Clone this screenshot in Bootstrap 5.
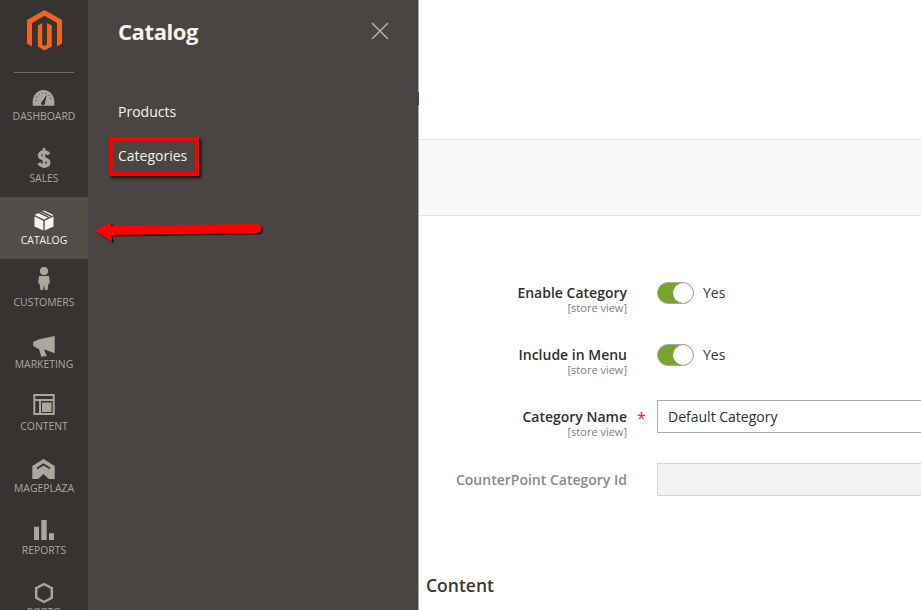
<!DOCTYPE html>
<html lang="en">
<head>
<meta charset="utf-8">
<title>Catalog</title>
<link href="https://cdn.jsdelivr.net/npm/bootstrap@5.3.0/dist/css/bootstrap.min.css" rel="stylesheet">
<style>
html,body{height:610px;overflow:hidden;background:#fff}
body{font-family:"Open Sans","Noto Sans",sans-serif;color:#303030}
.shell{height:610px;overflow:hidden}
.rail{width:88px;background:#373330;flex:none;height:610px;overflow:hidden}
.logo-box{height:73px;padding-top:10px;position:relative}
.logo-box svg{display:block;margin:0 auto}
.logo-box::after{content:"";position:absolute;left:14px;right:14px;bottom:0;height:1px;background:#736e6a}
.rail-item{height:62px;color:#aaa6a0;font-size:10.4px;line-height:14px;text-decoration:none;padding-top:12px;white-space:nowrap}
.rail-item.on{background:#524d49;color:#f7f3eb;font-weight:500}
.rail-icon{height:24px;display:block}
.rail-icon svg{display:block;overflow:visible}
.flyout{width:331px;flex:none;background:#4a4542;border-right:1px solid #a8a8a8;height:610px;position:relative;padding:15px 29px 0 30px}
.fly-title{font-size:22px;font-weight:700;letter-spacing:-.4px;color:#f7f3eb;line-height:32px;margin:0}
.fly-link{color:#f7f3eb;font-size:14px;font-weight:500;line-height:20px;text-decoration:none;display:block}
.fly-nav{margin-top:55px;gap:24px}
.fly-close{position:absolute;left:283px;top:22px}
.mark-box{position:absolute;left:21px;top:137px;width:90px;height:39px;border:4px solid #f00;box-shadow:2px 2px 3px rgba(0,0,0,.85)}
.mark-arrow{position:absolute;left:5px;top:218px}
.work{flex:1;min-width:0;height:610px;position:relative}
.head-space{height:139px}
.head-dot{position:absolute;left:-1px;top:92px;width:1px;height:13px;background:#1a4f8a}
.band{height:77px;background:#f8f8f8;border-top:1px solid #e3e3e3;border-bottom:1px solid #e3e3e3}
.form-area{padding-top:62px}
.frow{height:62px;align-items:flex-start}
.flabel{width:208px;text-align:right;flex:none;font-size:14px;font-weight:600;line-height:18px;color:#303030;padding-top:6px}
.flabel small{display:block;font-size:11px;font-weight:400;line-height:12px;color:#808080}
.flabel.muted{color:#8a8a8a;padding-top:7px}
.req{width:30px;flex:none;color:#e22626;font-size:16px;line-height:22px;padding-left:10px;padding-top:5px}
.flip{width:37px;height:22px;border-radius:11px;background:#79a22e;border:1px solid #a8a8a8;position:relative;flex:none;margin-top:4px}
.flip::after{content:"";position:absolute;right:0;top:0;width:20px;height:20px;border-radius:50%;background:#fff}
.yes{font-size:14px;line-height:22px;color:#41362f;margin-left:9px;margin-top:4px}
.inp{flex:1;height:33px;border:1px solid #adadad;border-right:0;padding:0 10px;font-size:14px;line-height:31px;color:#303030;background:#fff;margin-top:-2px}
.inp.off{background:#f2f2f2;border-color:#d4d4d4;margin-top:-1px}
.sect{position:absolute;left:7px;top:573px;font-size:17.5px;font-weight:600;line-height:24px;color:#41362f;margin:0}
</style>
</head>
<body>
<div class="shell d-flex">
  <nav class="rail">
    <div class="logo-box">
      <svg width="35" height="41" viewBox="0 0 35 41"><path fill="#f26322" d="M17.500 0 35 10V33.500L30 36.500V13L17.500 5.800 5 13V36.500L0 33.500V10Z"/><path fill="#f26322" d="M10.800 15.500 15.200 13V34.500L17.500 36 20 34.500V13L24.800 15.500V36.500L17.500 40.500 10.800 36.500Z"/></svg>
    </div>
    <a class="rail-item d-flex flex-column align-items-center" href="#"><span class="rail-icon"><svg width="24" height="24" viewBox="0 0 24 24"><path fill="#aaa6a0" d="M.8 20.700C-.6 11.500 4.500 5 11.500 5s12.100 6.500 10.700 15.700Z"/><path stroke="#373330" stroke-width="1" stroke-dasharray="1 2.500" fill="none" d="M4 16C4 11.500 7.500 8 11.500 8s7.500 3.500 7.500 8"/><path fill="#373330" d="M15 9.500 13 17.500a2 2 0 1 1-3-1Z"/></svg></span>DASHBOARD</a>
    <a class="rail-item d-flex flex-column align-items-center" href="#"><span class="rail-icon"><svg width="24" height="24" viewBox="0 0 24 24"><path fill="none" stroke="#aaa6a0" stroke-width="3.400" d="M16.800 7.500C16 5.800 14 5 12 5 9.500 5 7.500 6.300 7.500 8.500 7.500 13.500 16.800 10.500 16.800 15.500 16.800 17.800 14.500 18.800 12 18.800 10 18.800 8 18 7 16"/><path stroke="#aaa6a0" stroke-width="2.800" d="M12 1V21"/></svg></span>SALES</a>
    <a class="rail-item on d-flex flex-column align-items-center" href="#"><span class="rail-icon"><svg width="24" height="24" viewBox="0 0 24 24"><path fill="#f7f3eb" d="M12 1.500 21.500 6 12 10.500 2.500 6Z"/><path fill="#f7f3eb" d="M2.500 7.500 11.300 11.700V21.500L2.500 17.500ZM21.500 7.500 12.700 11.700V21.500L21.500 17.500Z"/><path stroke="#524d49" stroke-width="1.400" d="M7 3.500 16.500 8.200M9.500 2.500 19 7.200"/></svg></span>CATALOG</a>
    <a class="rail-item d-flex flex-column align-items-center" href="#"><span class="rail-icon"><svg width="24" height="24" viewBox="0 0 24 24"><circle cx="12" cy="0" r="4" fill="#aaa6a0"/><path fill="#aaa6a0" d="M7 5H17L18 12.500H16.500L15.500 19H13L12 14 11 19H8.500L7.500 12.500H6Z"/></svg></span>CUSTOMERS</a>
    <a class="rail-item d-flex flex-column align-items-center" href="#"><span class="rail-icon"><svg width="24" height="24" viewBox="0 0 24 24"><path fill="#aaa6a0" d="M1.300 8.700 7 6.300 22.700 3V20.300L12 16.300 14.700 23 9.300 23.700 7 16.300 1.300 13Z"/></svg></span>MARKETING</a>
    <a class="rail-item d-flex flex-column align-items-center" href="#"><span class="rail-icon"><svg width="24" height="24" viewBox="0 0 24 24"><path fill="none" stroke="#aaa6a0" stroke-width="2" d="M2.300 0H21.700V19H2.300ZM2.300 5H21.700M8 5V19"/><path fill="#aaa6a0" d="M10 7.500H19.500V17H10Z"/></svg></span>CONTENT</a>
    <a class="rail-item d-flex flex-column align-items-center" href="#"><span class="rail-icon"><svg width="24" height="24" viewBox="0 0 24 24"><path fill="#aaa6a0" d="M11.500 2 22.700 9V22H17L11.500 17 6 22H.3V9Z"/><path fill="none" stroke="#373330" stroke-width="2" d="M5 11.500 11.500 7.500 18 11.500"/></svg></span>MAGEPLAZA</a>
    <a class="rail-item d-flex flex-column align-items-center" href="#"><span class="rail-icon"><svg width="24" height="24" viewBox="0 0 24 24"><path fill="#aaa6a0" d="M2 7.700H7V21H2ZM9.300 1H14.700V21H9.300ZM17 14.300H22V21H17Z"/></svg></span>REPORTS</a>
    <a class="rail-item d-flex flex-column align-items-center" href="#"><span class="rail-icon"><svg width="24" height="24" viewBox="0 0 24 24"><path fill="none" stroke="#aaa6a0" stroke-width="2.400" d="M12 3 19.800 7.300V16.700L12 21 4.200 16.700V7.300Z"/></svg></span>PORTO</a>
  </nav>
  <aside class="flyout">
    <h2 class="fly-title">Catalog</h2>
    <svg class="fly-close" width="18" height="18" viewBox="0 0 18 18"><path stroke="#b3aea8" stroke-width="1.600" d="M1 1 17 17M17 1 1 17"/></svg>
    <div class="fly-nav d-flex flex-column">
      <a class="fly-link" href="#">Products</a>
      <a class="fly-link" href="#">Categories</a>
    </div>
    <div class="mark-box"></div>
    <svg class="mark-arrow" width="172" height="28" viewBox="0 0 172 28"><g transform="translate(1.500 1.500)" opacity=".7"><path d="M16 12.500 164 10.500" stroke="#000" stroke-width="9" stroke-linecap="round"/><path d="M2 13 18 4 19 24Z"/></g><path d="M16 12.500 164 10.500" stroke="#f00" stroke-width="9" stroke-linecap="round"/><path fill="#f00" d="M2 13 18 4 19 24Z"/></svg>
  </aside>
  <main class="work">
    <div class="head-dot"></div>
    <div class="head-space"></div>
    <div class="band"></div>
    <div class="form-area">
      <div class="frow d-flex">
        <div class="flabel">Enable Category<small>[store view]</small></div><div class="req"></div>
        <div class="d-flex"><div class="flip"></div><span class="yes">Yes</span></div>
      </div>
      <div class="frow d-flex">
        <div class="flabel">Include in Menu<small>[store view]</small></div><div class="req"></div>
        <div class="d-flex"><div class="flip"></div><span class="yes">Yes</span></div>
      </div>
      <div class="frow d-flex">
        <div class="flabel">Category Name<small>[store view]</small></div><div class="req">*</div>
        <div class="inp">Default Category</div>
      </div>
      <div class="frow d-flex">
        <div class="flabel muted">CounterPoint Category Id</div><div class="req"></div>
        <div class="inp off"></div>
      </div>
    </div>
    <h3 class="sect">Content</h3>
  </main>
</div>
<script src="https://cdn.jsdelivr.net/npm/bootstrap@5.3.0/dist/js/bootstrap.bundle.min.js"></script>
</body>
</html>
